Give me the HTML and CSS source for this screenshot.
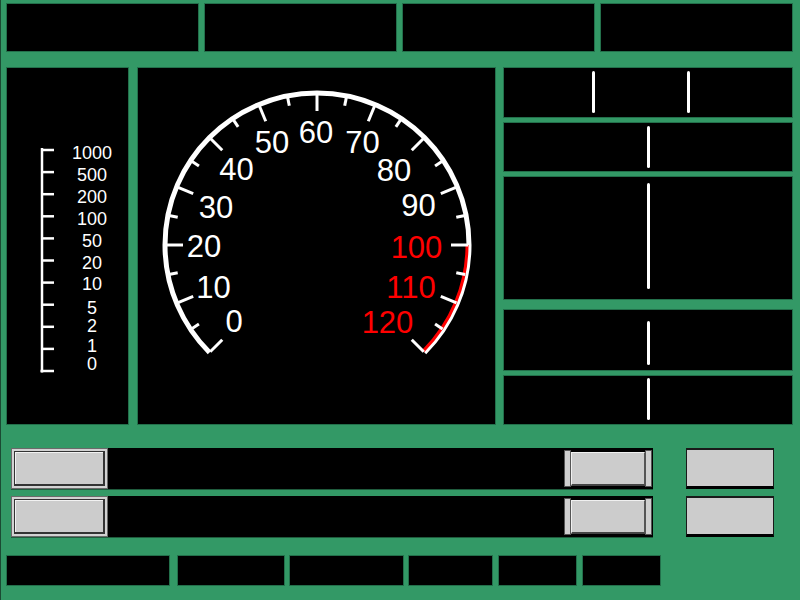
FILE: index.html
```html
<!DOCTYPE html>
<html>
<head>
<meta charset="utf-8">
<link rel="stylesheet" href="styles.css">
</head>
<body>
<div class="screen">
  <div class="top-row">
    <div class="panel"></div>
    <div class="panel"></div>
    <div class="panel"></div>
    <div class="panel"></div>
  </div>

  <div class="mid-row">
    <div class="panel scale-panel">
      <svg class="scale" width="121" height="356" viewBox="0 0 121 356">
        <g class="scale-lines">
          <line x1="35" y1="80" x2="35" y2="304.5"/>
          <line x1="35" y1="82" x2="47" y2="82"/>
          <line x1="35" y1="104.1" x2="47" y2="104.1"/>
          <line x1="35" y1="126.2" x2="47" y2="126.2"/>
          <line x1="35" y1="148.3" x2="47" y2="148.3"/>
          <line x1="35" y1="170.4" x2="47" y2="170.4"/>
          <line x1="35" y1="192.5" x2="47" y2="192.5"/>
          <line x1="35" y1="214.6" x2="47" y2="214.6"/>
          <line x1="35" y1="236.7" x2="47" y2="236.7"/>
          <line x1="35" y1="258.8" x2="47" y2="258.8"/>
          <line x1="35" y1="280.9" x2="47" y2="280.9"/>
          <line x1="33.5" y1="303" x2="47" y2="303"/>
        </g>
        <g class="scale-text">
          <text x="85" y="90.5">1000</text>
          <text x="85" y="112.5">500</text>
          <text x="85" y="134.5">200</text>
          <text x="85" y="156.5">100</text>
          <text x="85" y="178.5">50</text>
          <text x="85" y="200.5">20</text>
          <text x="85" y="221.5">10</text>
          <text x="85" y="245.5">5</text>
          <text x="85" y="263.5">2</text>
          <text x="85" y="283.5">1</text>
          <text x="85" y="301.5">0</text>
        </g>
      </svg>
    </div>

    <div class="panel gauge-panel">
      <svg class="gauge" width="357" height="356" viewBox="0 0 357 356">
        <path class="arc" d="M 71.52 284.48 A 152 152 0 1 1 286.48 284.48"/>
        <path class="arc-red" d="M 329 177 A 150 150 0 0 1 285.07 283.07"/>
        <g transform="translate(179,177)" class="ticks">
          <line class="major" x1="-151" y1="0" x2="-134" y2="0" transform="rotate(-45)"/>
          <line class="major" x1="-151" y1="0" x2="-134" y2="0" transform="rotate(-22.5)"/>
          <line class="major" x1="-151" y1="0" x2="-134" y2="0" transform="rotate(0)"/>
          <line class="major" x1="-151" y1="0" x2="-134" y2="0" transform="rotate(22.5)"/>
          <line class="major" x1="-151" y1="0" x2="-134" y2="0" transform="rotate(45)"/>
          <line class="major" x1="-151" y1="0" x2="-134" y2="0" transform="rotate(67.5)"/>
          <line class="major" x1="-151" y1="0" x2="-134" y2="0" transform="rotate(90)"/>
          <line class="major" x1="-151" y1="0" x2="-134" y2="0" transform="rotate(112.5)"/>
          <line class="major" x1="-151" y1="0" x2="-134" y2="0" transform="rotate(135)"/>
          <line class="major" x1="-151" y1="0" x2="-134" y2="0" transform="rotate(157.5)"/>
          <line class="major" x1="-151" y1="0" x2="-134" y2="0" transform="rotate(180)"/>
          <line class="major" x1="-151" y1="0" x2="-134" y2="0" transform="rotate(202.5)"/>
          <line class="major" x1="-151" y1="0" x2="-134" y2="0" transform="rotate(225)"/>
          <line class="minor" x1="-151" y1="0" x2="-142" y2="0" transform="rotate(-33.75)"/>
          <line class="minor" x1="-151" y1="0" x2="-142" y2="0" transform="rotate(-11.25)"/>
          <line class="minor" x1="-151" y1="0" x2="-142" y2="0" transform="rotate(11.25)"/>
          <line class="minor" x1="-151" y1="0" x2="-142" y2="0" transform="rotate(33.75)"/>
          <line class="minor" x1="-151" y1="0" x2="-142" y2="0" transform="rotate(56.25)"/>
          <line class="minor" x1="-151" y1="0" x2="-142" y2="0" transform="rotate(78.75)"/>
          <line class="minor" x1="-151" y1="0" x2="-142" y2="0" transform="rotate(101.25)"/>
          <line class="minor" x1="-151" y1="0" x2="-142" y2="0" transform="rotate(123.75)"/>
          <line class="minor" x1="-151" y1="0" x2="-142" y2="0" transform="rotate(146.25)"/>
          <line class="minor" x1="-151" y1="0" x2="-142" y2="0" transform="rotate(168.75)"/>
          <line class="minor" x1="-151" y1="0" x2="-142" y2="0" transform="rotate(191.25)"/>
          <line class="minor" x1="-151" y1="0" x2="-142" y2="0" transform="rotate(213.75)"/>
        </g>
        <g class="labels">
          <text x="96" y="264">0</text>
          <text x="75.5" y="229.5">10</text>
          <text x="66" y="189">20</text>
          <text x="78" y="149.5">30</text>
          <text x="98.5" y="111.5">40</text>
          <text x="134" y="85">50</text>
          <text x="178" y="74.5">60</text>
          <text x="224.5" y="85">70</text>
          <text x="256" y="112.5">80</text>
          <text x="280.5" y="147.5">90</text>
          <text class="red" x="278.5" y="189.5">100</text>
          <text class="red" x="273" y="229.5">110</text>
          <text class="red" x="249.5" y="264.5">120</text>
        </g>
      </svg>
    </div>

    <div class="right-col">
      <div class="panel rp rp1"><div class="mark"></div><div class="mark mark-b"></div></div>
      <div class="panel rp rp2"><div class="mark"></div></div>
      <div class="panel rp rp3"><div class="mark"></div></div>
      <div class="panel rp rp4"><div class="mark"></div></div>
      <div class="panel rp rp5"><div class="mark"></div></div>
    </div>
  </div>

  <div class="controls">
    <div class="ctrl-row">
      <div class="slider">
        <div class="thumb"><div class="thumb-inner"></div></div>
        <div class="rthumb"><div class="strip strip-l"></div><div class="rblock"></div><div class="strip strip-r"></div></div>
      </div>
      <div class="btn"></div>
    </div>
    <div class="ctrl-row">
      <div class="slider">
        <div class="thumb"><div class="thumb-inner"></div></div>
        <div class="rthumb"><div class="strip strip-l"></div><div class="rblock"></div><div class="strip strip-r"></div></div>
      </div>
      <div class="btn"></div>
    </div>
  </div>

  <div class="bottom-row">
    <div class="panel b1"></div>
    <div class="panel b2"></div>
    <div class="panel b3"></div>
    <div class="panel b4"></div>
    <div class="panel b5"></div>
    <div class="panel b6"></div>
  </div>
</div>
</body>
</html>
```

FILE: styles.css
```css
html, body {
  margin: 0;
  padding: 0;
  background: #339966;
  font-family: "Liberation Sans", Arial, sans-serif;
}

.screen {
  width: 800px;
  height: 600px;
  box-sizing: border-box;
  border-left: 1px solid #1b4a33;
  padding-top: 4px;
  overflow: hidden;
}

.panel {
  background: #000;
  box-shadow: 0 0 0 1px #23704b;
  box-sizing: border-box;
}

.top-row {
  display: grid;
  grid-template-columns: repeat(4, 1fr);
  column-gap: 7px;
  height: 47px;
  margin: 0 8px 0 6px;
}

.mid-row {
  display: flex;
  height: 356px;
  margin-top: 17px;
  padding-left: 6px;
}

.scale-panel {
  width: 121px;
  margin-right: 10px;
}

.scale {
  display: block;
}

.scale-lines line {
  stroke: #fff;
  stroke-width: 2.5;
}

.scale-text text {
  fill: #fff;
  font-size: 18px;
  text-anchor: middle;
  font-family: "Liberation Sans", Arial, sans-serif;
}

.gauge-panel {
  width: 357px;
  margin-right: 9px;
}

.gauge {
  display: block;
}

.arc {
  fill: none;
  stroke: #fff;
  stroke-width: 5;
}

.arc-red {
  fill: none;
  stroke: #ff0000;
  stroke-width: 3;
}

.ticks line {
  stroke: #fff;
  stroke-width: 3;
}

.labels text {
  fill: #fff;
  font-size: 31px;
  text-anchor: middle;
  font-family: "Liberation Sans", Arial, sans-serif;
}

.labels text.red {
  fill: #ff0000;
}

.right-col {
  width: 288px;
  display: flex;
  flex-direction: column;
}

.rp {
  display: flex;
  align-items: flex-start;
}

.mark {
  width: 3px;
  background: #fff;
  border-radius: 2px;
}

.rp1 {
  height: 49px;
  padding: 3px 0 0 88px;
}
.rp1 .mark { height: 42px; }
.rp1 .mark-b { margin-left: 92px; }

.rp2 {
  height: 48px;
  margin-top: 6px;
  padding: 3px 0 0 143px;
}
.rp2 .mark { height: 42px; }

.rp3 {
  height: 122px;
  margin-top: 6px;
  padding: 6px 0 0 143px;
}
.rp3 .mark { height: 106px; }

.rp4 {
  height: 60px;
  margin-top: 11px;
  padding: 11px 0 0 143px;
}
.rp4 .mark { height: 44px; }

.rp5 {
  height: 48px;
  margin-top: 6px;
  padding: 2px 0 0 143px;
}
.rp5 .mark { height: 42px; }

.controls {
  margin-top: 24px;
  display: flex;
  flex-direction: column;
  row-gap: 7px;
}

.ctrl-row {
  display: flex;
  height: 41px;
  padding-left: 10px;
}

.slider {
  width: 642px;
  height: 41px;
  background: #000;
  box-shadow: 0 1px 0 0 #1f5c3d;
  display: flex;
  justify-content: space-between;
  align-items: center;
}

.thumb {
  width: 97px;
  height: 41px;
  box-sizing: border-box;
  border: 1px solid #6a6a6a;
  padding: 2px;
  background: #d2d2d2;
}

.thumb-inner {
  height: 100%;
  box-sizing: border-box;
  border: 1px solid #333;
  border-right-width: 2px;
  border-bottom-width: 2px;
  background: #cccccc;
  box-shadow: inset 1px 1px 0 #f2f2f2;
}

.rthumb {
  display: flex;
  align-items: center;
  margin-right: 1px;
}

.strip {
  width: 7px;
  height: 37px;
  box-sizing: border-box;
  background: #cfcfcf;
  border: 1px solid #555;
}

.rblock {
  width: 74px;
  height: 34px;
  box-sizing: border-box;
  background: #cccccc;
  border-top: 1px solid #f0f0f0;
  border-left: 1px solid #f0f0f0;
  border-right: 1px solid #555;
  border-bottom: 2px solid #444;
}

.btn {
  width: 88px;
  height: 41px;
  margin-left: 33px;
  box-sizing: border-box;
  background: #cccccc;
  border: 1px solid #1a1a1a;
  border-top-width: 2px;
  border-bottom: 3px solid #000;
}

.bottom-row {
  display: flex;
  height: 29px;
  margin-top: 19px;
  padding-left: 6px;
}

.b1 { width: 162px; }
.b2 { width: 106px; margin-left: 9px; }
.b3 { width: 113px; margin-left: 6px; }
.b4 { width: 83px; margin-left: 6px; }
.b5 { width: 77px; margin-left: 7px; }
.b6 { width: 77px; margin-left: 7px; }
```
